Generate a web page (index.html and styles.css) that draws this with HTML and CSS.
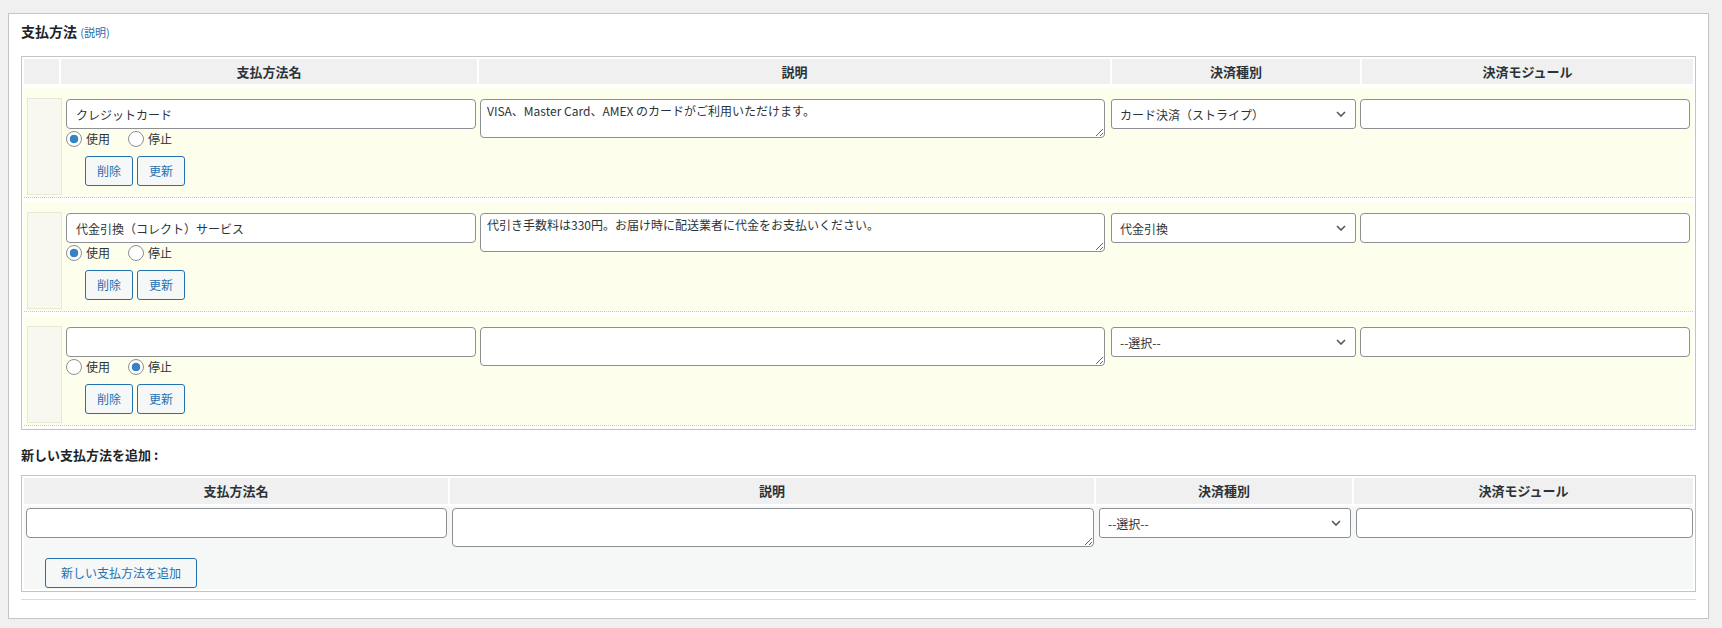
FILE: index.html
```html
<!DOCTYPE html>
<html lang="ja">
  <head>
    <meta charset="UTF-8" />
    <title>支払方法</title>
    <link rel="stylesheet" href="styles.css">
  </head>
  <body>
    <div class="postbox">
      <h3 class="box-title">支払方法 <a class="help" href="#">(説明)</a></h3>

      <!-- 登録済みの支払方法 -->
      <div class="paytable">
        <div class="head">
          <div></div>
          <div>支払方法名</div>
          <div>説明</div>
          <div>決済種別</div>
          <div>決済モジュール</div>
        </div>

        <div class="payrow">
          <div class="handle"></div>
          <div class="namecell">
            <input type="text" class="txt" value="クレジットカード">
            <div class="opts">
              <label><input type="radio" name="use1" checked>使用</label>
              <label><input type="radio" name="use1">停止</label>
            </div>
            <div class="btns">
              <button class="button">削除</button>
              <button class="button">更新</button>
            </div>
          </div>
          <textarea class="desc">VISA、Master Card、AMEX のカードがご利用いただけます。</textarea>
          <div class="selectwrap">
            <select>
              <option>カード決済（ストライプ）</option>
            </select>
            <svg class="chev" width="10" height="6" viewBox="0 0 10 6"><path d="M1 1l4 4 4-4" fill="none" stroke="#50575e" stroke-width="1.6"/></svg>
          </div>
          <input type="text" class="txt">
        </div>

        <div class="payrow">
          <div class="handle"></div>
          <div class="namecell">
            <input type="text" class="txt" value="代金引換（コレクト）サービス">
            <div class="opts">
              <label><input type="radio" name="use2" checked>使用</label>
              <label><input type="radio" name="use2">停止</label>
            </div>
            <div class="btns">
              <button class="button">削除</button>
              <button class="button">更新</button>
            </div>
          </div>
          <textarea class="desc">代引き手数料は330円。お届け時に配送業者に代金をお支払いください。</textarea>
          <div class="selectwrap">
            <select>
              <option>代金引換</option>
            </select>
            <svg class="chev" width="10" height="6" viewBox="0 0 10 6"><path d="M1 1l4 4 4-4" fill="none" stroke="#50575e" stroke-width="1.6"/></svg>
          </div>
          <input type="text" class="txt">
        </div>

        <div class="payrow">
          <div class="handle"></div>
          <div class="namecell">
            <input type="text" class="txt">
            <div class="opts">
              <label><input type="radio" name="use3">使用</label>
              <label><input type="radio" name="use3" checked>停止</label>
            </div>
            <div class="btns">
              <button class="button">削除</button>
              <button class="button">更新</button>
            </div>
          </div>
          <textarea class="desc"></textarea>
          <div class="selectwrap">
            <select>
              <option>--選択--</option>
            </select>
            <svg class="chev" width="10" height="6" viewBox="0 0 10 6"><path d="M1 1l4 4 4-4" fill="none" stroke="#50575e" stroke-width="1.6"/></svg>
          </div>
          <input type="text" class="txt">
        </div>
      </div>

      <h4 class="sub-title">新しい支払方法を追加 :</h4>

      <!-- 新規追加 -->
      <div class="newtable">
        <div class="head">
          <div>支払方法名</div>
          <div>説明</div>
          <div>決済種別</div>
          <div>決済モジュール</div>
        </div>
        <div class="newbody">
          <div class="newrow">
            <input type="text" class="txt">
            <textarea class="desc"></textarea>
            <div class="selectwrap">
              <select>
                <option>--選択--</option>
              </select>
              <svg class="chev" width="10" height="6" viewBox="0 0 10 6"><path d="M1 1l4 4 4-4" fill="none" stroke="#50575e" stroke-width="1.6"/></svg>
            </div>
            <input type="text" class="txt">
          </div>
          <button class="button add">新しい支払方法を追加</button>
        </div>
      </div>

      <hr class="line">
    </div>
  </body>
</html>
```

FILE: styles.css
```css
body {
  margin: 0;
  padding: 13px 13px 0 8px;
  background-color: #f0f0f1;
  font-family: "Noto Sans CJK JP", "Noto Sans", sans-serif;
  font-size: 12px;
  color: #2c3338;
}

.postbox {
  background-color: #fff;
  border: 1px solid #c3c4c7;
  padding: 0 12px 18px;
}

.box-title {
  margin: 0 0 14px;
  padding-top: 7px;
  font-size: 14px;
  line-height: 20px;
  color: #1d2327;
}

.box-title .help {
  font-size: 11px;
  font-weight: normal;
  color: #2271b1;
  text-decoration: none;
}

.sub-title {
  margin: 15px 0 10px;
  font-size: 13px;
  line-height: 20px;
  color: #1d2327;
}

/* 表の見出し */
.head {
  display: grid;
  column-gap: 2px;
}

.head div {
  background-color: #f0f0f1;
  text-align: center;
  font-size: 13px;
  font-weight: bold;
  color: #2c3338;
}

/* 登録済みテーブル */
.paytable {
  border: 1px solid #c3c4c7;
  padding: 2px 2px 3px;
  display: flex;
  flex-direction: column;
  gap: 4px;
}

.paytable .head {
  grid-template-columns: 35px 416px 631px 248px 1fr;
  height: 25px;
  line-height: 25px;
}

.payrow {
  display: grid;
  grid-template-columns: 35px 410px 627px 245px 1fr;
  column-gap: 4px;
  align-items: start;
  padding: 10px 3px 2px;
  background-color: #fefeec;
  border-bottom: 1px dotted #c8c8c8;
}

.handle {
  align-self: stretch;
  box-sizing: border-box;
  background-color: #f8f8f0;
  border: 1px solid #e8e8d4;
}

.namecell {
  padding-top: 1px;
  margin-bottom: 9px;
}

.payrow > .desc,
.payrow > .selectwrap,
.payrow > .txt {
  margin-top: 1px;
}

/* 入力欄 */
.txt,
.desc,
select {
  box-sizing: border-box;
  display: block;
  width: 100%;
  margin: 0;
  border: 1px solid #8c8f94;
  border-radius: 4px;
  background-color: #fff;
  font-family: inherit;
  font-size: 12px;
  color: #2c3338;
}

.txt {
  height: 30px;
  padding: 0 9px;
}

.desc {
  width: 625px;
  height: 39px;
  padding: 3px 6px;
  line-height: 16px;
}

.selectwrap {
  position: relative;
}

select {
  height: 30px;
  padding: 0 24px 0 8px;
  appearance: none;
  -webkit-appearance: none;
  border-radius: 3px;
}

.chev {
  position: absolute;
  right: 10px;
  top: 12px;
  pointer-events: none;
}

/* 使用・停止 */
.opts {
  display: flex;
  margin-top: 2px;
  height: 16px;
  line-height: 16px;
}

.opts label {
  display: flex;
  align-items: center;
  margin-right: 18px;
  color: #2c3338;
}

.opts input {
  appearance: none;
  -webkit-appearance: none;
  width: 16px;
  height: 16px;
  margin: 0 4px 0 0;
  border: 1px solid #8c8f94;
  border-radius: 50%;
  background-color: #fff;
}

.opts input:checked {
  background: radial-gradient(circle, #3582c4 0 4px, #fff 4.6px);
}

.btns {
  display: flex;
  gap: 4px;
  margin: 9px 0 0 19px;
}

.button {
  height: 30px;
  padding: 0 11px;
  border: 1px solid #2271b1;
  border-radius: 3px;
  background-color: #f6f7f7;
  color: #2271b1;
  font-family: inherit;
  font-size: 12px;
  line-height: 28px;
}

/* 新規追加テーブル */
.newtable {
  border: 1px solid #c3c4c7;
  padding: 2px;
  display: flex;
  flex-direction: column;
  gap: 2px;
}

.newtable .head {
  grid-template-columns: 424px 644px 256px 1fr;
  height: 26px;
  line-height: 26px;
}

.newbody {
  background-color: #f6f7f7;
  padding: 2px 0 1px 2px;
}

.newrow {
  display: grid;
  grid-template-columns: 421px 642px 252px 1fr;
  column-gap: 5px;
  align-items: start;
}

.newrow .desc {
  width: 100%;
}

.button.add {
  margin: 11px 0 0 19px;
  padding: 0 15px;
}

.line {
  margin: 7px 0 0;
  border: 0;
  border-top: 1px solid #dcdcde;
}
```
